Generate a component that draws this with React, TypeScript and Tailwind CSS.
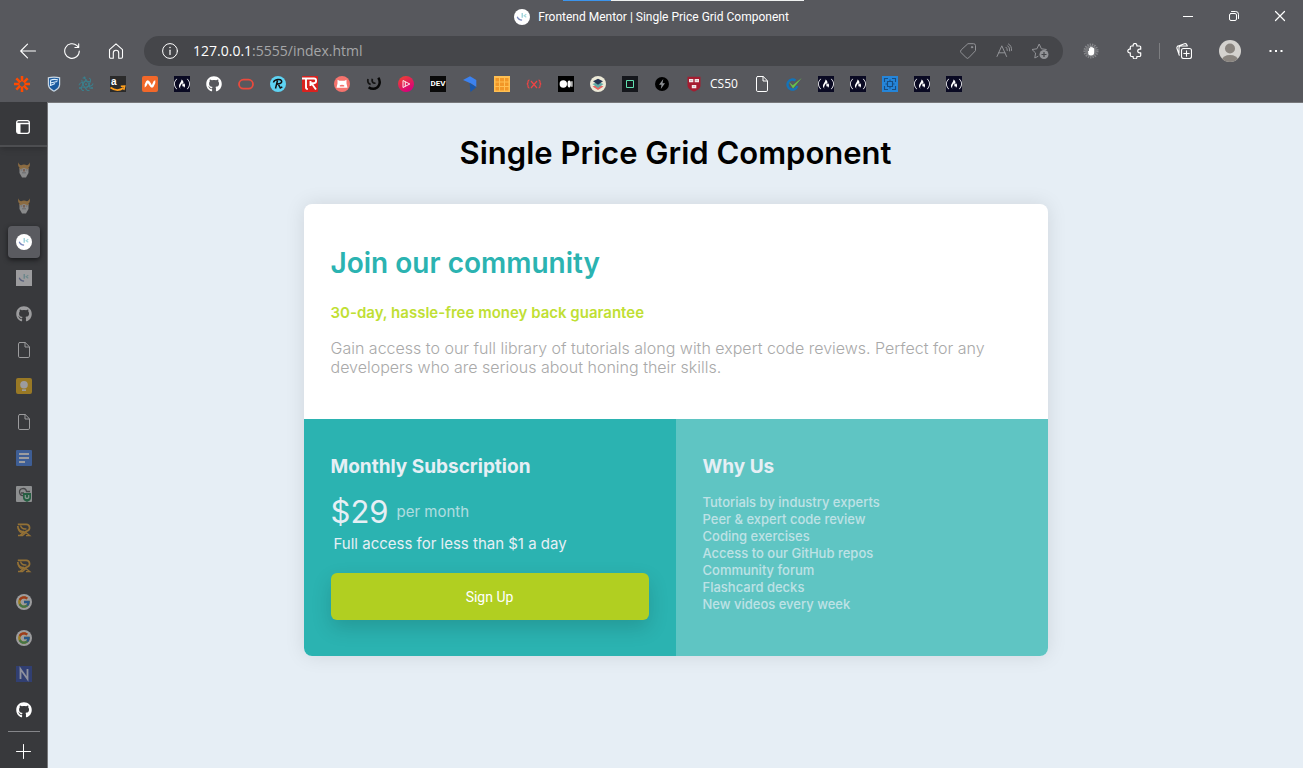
import type { ReactNode } from 'react';
import { FaFreeCodeCamp, FaGithub } from 'react-icons/fa';
import { FcGoogle } from 'react-icons/fc';

function Art({ children }: { children: ReactNode }) {
  return (
    <svg viewBox="0 0 16 16" className="size-4 shrink-0" fill="none" aria-hidden="true">
      {children}
    </svg>
  );
}

function LineArt({ children }: { children: ReactNode }) {
  return (
    <svg
      viewBox="0 0 16 16"
      className="size-4 shrink-0"
      fill="none"
      stroke="currentColor"
      strokeLinecap="round"
      strokeLinejoin="round"
      aria-hidden="true"
    >
      {children}
    </svg>
  );
}

const MentorMark = ({ round = true }: { round?: boolean }) => (
  <Art>
    {round ? <circle cx="8" cy="8" r="8" fill="#fff" /> : <rect width="16" height="16" fill="#fff" />}
    <path d="M3.3 7.8c.6 2.1 2.2 3.2 4.8 3.4" stroke="#7888bd" strokeWidth="1.3" />
    <path d="M8.2 4v4.8" stroke="#8fcbd4" strokeWidth="1.2" />
    <path d="M12.3 5.3 10.1 6.8l2.2 1.5" stroke="#a2d8dd" strokeWidth="1.1" />
  </Art>
);

const FreeCodeCamp = () => (
  <span className="flex size-4 items-center justify-center bg-[#0a0a23] text-white">
    <FaFreeCodeCamp className="size-4" />
  </span>
);

const PageIcon = () => (
  <LineArt>
    <path d="M3.8.5h5.400l4.300 4.300v9.400a1.300 1.300 0 0 1-1.300 1.300H3.800a1.300 1.300 0 0 1-1.300-1.300V1.800A1.300 1.300 0 0 1 3.800.5z" />
    <path d="M9 .700V5h4.300" />
  </LineArt>
);

const Viking = () => (
  <Art>
    <path d="M3.500 6h9v5L10 15.500H6L3.500 11z" fill="#d9dad9" />
    <path d="M2.300.300C1.800 3 2.300 5 3.500 5.500V7.500L8 6l4.500 1.500v-2c1.200-.5 1.700-2.500 1.200-5.200C13.300 2 12.300 3 10.800 3.300Q8 1.800 5.200 3.300C3.700 3 2.700 2 2.300.300z" fill="#e0a048" />
    <path d="M7 7h2v2.500H7z" fill="#b98c70" />
    <path d="M4.700 8h1.500M9.800 8h1.500M6 10.800h4" stroke="#8d8e90" strokeWidth=".8" />
  </Art>
);

const Feather = () => (
  <Art>
    <path d="M1.800 2.300h8.500a3.400 3.400 0 0 1 1 6.600C8 10 6.500 10.800 4.300 13.500M1.800 4c0 4 2.500 6.200 6 5.300" stroke="#f0aa30" strokeWidth="1.700" />
    <path d="M4.500 3.500c1 3 2.800 4 6 3.300M2.500 6.500c.5 3.500 2 4.500 4.500 4.500M2 13.500h4.500l3.500-3 3.800 3.200H10" stroke="#f0aa30" strokeWidth="1.300" />
  </Art>
);

const Google = () => (
  <span className="flex size-4 items-center justify-center rounded-full bg-white">
    <FcGoogle className="size-[14px]" />
  </span>
);

type Item = { name: string; icon: ReactNode; label?: string };

const bookmarks: Item[] = [
  {
    name: 'Zapier',
    icon: (
      <Art>
        <path d="M8 0v5.600M8 10.400V16M0 8h5.600M10.400 8H16M2.300 2.300l4 4M9.700 9.700l4 4M13.700 2.300l-4 4M6.300 9.700l-4 4" stroke="#ff4a00" strokeWidth="2.500" />
      </Art>
    ),
  },
  {
    name: 'Standard Bank',
    icon: (
      <Art>
        <path d="M1.800 1.300Q8-.3 14.200 1.300v7.200c0 3.500-3.200 5.900-6.200 7.300-3-1.400-6.200-3.800-6.200-7.300z" fill="#c9d6e2" />
        <path d="M3 2.300Q8 1.200 13 2.300v6c0 3-2.500 4.800-5 6.200-2.500-1.400-5-3.200-5-6.200z" fill="#1a5a9e" />
        <path d="M4 4.500q4-2 8-.5M4.300 7l7-1.500M4.500 9.500l4.500-2M4.500 5v5" stroke="#d9ecfb" strokeWidth="1.200" />
      </Art>
    ),
  },
  {
    name: 'Electron',
    icon: (
      <Art>
        <g stroke="#3b7f8c" strokeWidth="1">
          <ellipse cx="8" cy="8.300" rx="7" ry="2.700" transform="rotate(-8 8 8.300)" strokeDasharray="13 3" />
          <ellipse cx="8" cy="8.300" rx="7" ry="2.700" transform="rotate(60 8 8.300)" strokeDasharray="14 2" />
          <ellipse cx="8" cy="8.300" rx="7" ry="2.700" transform="rotate(122 8 8.300)" strokeDasharray="12 3" />
        </g>
        <circle cx="8" cy="8.300" r="1" fill="#3b7f8c" />
        <circle cx="2" cy="12" r="1.100" fill="#3b7f8c" />
        <circle cx="14" cy="12" r="1.100" fill="#3b7f8c" />
        <circle cx="6.500" cy="1.500" r="1.100" fill="#3b7f8c" />
      </Art>
    ),
  },
  {
    name: 'Amazon',
    icon: (
      <Art>
        <rect width="16" height="16" fill="#2b2b2b" />
        <text x="1" y="9.300" fill="#fff" fontFamily="Liberation Sans" fontWeight="700" fontSize="10">a</text>
        <path d="M.5 11.500q6.800 5 13.200.2" stroke="#ff9f1c" strokeWidth="1.700" />
        <path d="m10.800 10.300 4-.3-1 4" stroke="#ff9f1c" strokeWidth="1.400" />
      </Art>
    ),
  },
  {
    name: 'Namecheap',
    icon: (
      <Art>
        <rect width="16" height="16" rx="2" fill="#f2682a" />
        <path d="M2.700 10.200c1.500 0 1.700-4.700 3-4.700 1.500 0 2.700 5 4.300 5 1.400 0 1.700-5 3.300-5" stroke="#fff" strokeWidth="2.400" />
      </Art>
    ),
  },
  { name: 'freeCodeCamp', icon: <FreeCodeCamp /> },
  { name: 'GitHub', icon: <FaGithub className="size-4 text-white" /> },
  {
    name: 'Oracle',
    icon: (
      <Art>
        <rect x="1" y="3.700" width="14" height="9" rx="4.500" stroke="#ea4a3d" strokeWidth="1.800" />
      </Art>
    ),
  },
  {
    name: 'Replay',
    icon: (
      <Art>
        <circle cx="8" cy="8" r="8" fill="#5ed3f3" />
        <path d="M3.500 6.500C4 3.500 11.500 2 11.700 5.300c.1 2-2.700 2.700-4.700 2.900M7.500 4.500l-2 8M8.300 8.200l2 3.800 2-1.200" stroke="#111" strokeWidth="1.500" />
      </Art>
    ),
  },
  {
    name: 'TechRepublic',
    icon: (
      <Art>
        <rect width="16" height="16" rx="1" fill="#d9221f" />
        <path d="M0 2.500h12c2.800 0 2.800 4.700 0 4.700H9.500l4.500 6.300M4 3v8.500q0 1.500 1.800 1.500M8.500 5v5" stroke="#fff" strokeWidth="1.900" />
      </Art>
    ),
  },
  {
    name: 'Bear',
    icon: (
      <Art>
        <circle cx="8" cy="8" r="8" fill="#f5736d" />
        <path d="M3.500 3.800 5.500 4.800h5l2-1v3.700l1 4.300H2.500l1-4.300z" fill="#fff" />
        <path d="M5.800 10.500V9.300q2.200-1.300 4.400 0v1.200z" fill="#f5736d" />
      </Art>
    ),
  },
  {
    name: 'Udacity',
    icon: (
      <Art>
        <path d="M2 3c-.7 3 .3 5 2.700 5.300M6.300 2.700c-.7 3 .7 5 3.200 4.300" stroke="#151515" strokeWidth="1.800" />
        <path d="M12.300 1.800c3.200 4.700.5 11-5 11-1.800 0-3.300-.5-4.600-1.600" stroke="#080808" strokeWidth="2.500" />
      </Art>
    ),
  },
  {
    name: 'Pluralsight',
    icon: (
      <Art>
        <defs>
          <linearGradient id="plural" x1="0" y1="0" x2="0.600" y2="1">
            <stop stopColor="#f0472b" />
            <stop offset="1" stopColor="#d8007c" />
          </linearGradient>
        </defs>
        <circle cx="8" cy="8" r="8" fill="url(#plural)" />
        <path d="m5 4.500 6.800 3.500L5 11.500zM7.300 5.700v4.600" stroke="#fff" strokeWidth=".9" />
      </Art>
    ),
  },
  {
    name: 'Dev',
    icon: (
      <span className="flex size-4 items-center justify-center bg-[#0a0a0a] font-['Roboto',sans-serif] text-[8px] leading-4 font-bold text-white">
        DEV
      </span>
    ),
  },
  {
    name: 'Blue flag',
    icon: (
      <Art>
        <path d="M1 4 8 .300 14.300 4v7L9 7.500z" fill="#3c82f0" />
        <path d="m7.500 7 6.800 4.300L8.500 16z" fill="#1757ad" />
      </Art>
    ),
  },
  {
    name: 'Grid',
    icon: (
      <Art>
        <rect width="16" height="16" fill="#ffbf52" />
        <path d="M1.500 2H5v3.500H1.500zM6 2h4v3.500H6zM11 2h3.500v3.500H11zM1.500 6.500H5V10H1.500zM6 6.500h4V10H6zM11 6.500h3.500V10H11zM1.500 11H5v3.500H1.500zM6 11h4v3.500H6zM11 11h3.500v3.500H11z" fill="#f29727" />
      </Art>
    ),
  },
  {
    name: 'Variable',
    icon: (
      <Art>
        <path d="M3.500 4Q2 4 2 5.500v1Q2 7.800.8 8q1.200.2 1.200 1.500v1Q2 12 3.500 12M12.500 4Q14 4 14 5.500v1q0 1.300 1.200 1.500-1.200.2-1.200 1.500v1q0 1.500-1.500 1.500M5 5l6 7M11 5l-6 7" stroke="#f04444" strokeWidth="1.200" />
      </Art>
    ),
  },
  {
    name: 'Medium',
    icon: (
      <Art>
        <rect width="16" height="16" fill="#000" />
        <circle cx="5.300" cy="8" r="3.700" fill="#fff" />
        <ellipse cx="11.200" cy="8" rx="1.700" ry="3.400" fill="#fff" />
        <path d="M13.900 5.300v5.400" stroke="#fff" strokeWidth="1.200" />
      </Art>
    ),
  },
  {
    name: 'Layers',
    icon: (
      <Art>
        <circle cx="8" cy="8" r="8" fill="#ece9d7" />
        <path d="m2.500 10.500 5.500-2 5.500 2L8 14z" fill="#e86561" />
        <path d="m2.500 8 5.500-2 5.500 2L8 12z" fill="#5faaa7" />
        <path d="m3 5.300 5-2.500 5 2.500-5 3.500z" fill="#263552" />
      </Art>
    ),
  },
  {
    name: 'Square',
    icon: (
      <Art>
        <rect width="16" height="16" fill="#15171c" />
        <path d="M4.500 4.500h7v7h-7z" stroke="#61e1b0" />
      </Art>
    ),
  },
  {
    name: 'Bolt',
    icon: (
      <Art>
        <circle cx="8" cy="8" r="7" fill="#000" />
        <path d="M9.300 3 5 8.700h2.500L6.800 13 11 7.300H8.500z" fill="#8d9094" />
      </Art>
    ),
  },
  {
    name: 'CS50',
    label: 'CS50',
    icon: (
      <Art>
        <path d="M1.500.700h13v8.500c0 3.400-3.500 5.300-6.500 6.300-3-1-6.500-2.900-6.500-6.300z" fill="#a51c30" />
        <path d="M3 3h4.300v3.300H3zM8.700 3H13v3.300H8.700zM5.800 9h4.500v3.200H5.800z" fill="#f3e7e8" />
        <path d="M4 4.500h2.300M9.700 4.500H12M7 10.500h2" stroke="#b5a9ab" strokeWidth=".6" />
      </Art>
    ),
  },
  { name: 'Saved page', icon: <PageIcon /> },
  {
    name: 'Check',
    icon: (
      <Art>
        <path d="M9.500 4.500A5 5 0 1 0 11.300 10" stroke="#1473b8" strokeWidth="2.400" />
        <path d="m2.800 6 3.900 3.300L15.700 2 7 12.500z" fill="#67c34a" />
      </Art>
    ),
  },
  { name: 'Lessons', icon: <FreeCodeCamp /> },
  { name: 'Projects', icon: <FreeCodeCamp /> },
  {
    name: 'Frame',
    icon: (
      <Art>
        <rect width="16" height="16" fill="#2585d9" />
        <path d="M2.500 6v-3.500H6M10 2.500h3.500V6M13.500 10v3.500H10M6 13.500H2.500V10M5.500 5.500h5v5h-5zM8 3.500v2M8 10.500v2M3.500 8h2M10.500 8h2" stroke="#174d82" strokeWidth="1.100" />
      </Art>
    ),
  },
  { name: 'Forum', icon: <FreeCodeCamp /> },
  { name: 'Certificates', icon: <FreeCodeCamp /> },
];

const tabs: (Item & { active?: boolean; bright?: boolean })[] = [
  { name: 'Viking', icon: <Viking /> },
  { name: 'Viking settings', icon: <Viking /> },
  { name: 'Frontend Mentor', icon: <MentorMark />, active: true },
  { name: 'Challenges', icon: <MentorMark round={false} /> },
  { name: 'GitHub', icon: <FaGithub className="size-4 text-white" /> },
  { name: 'Document', icon: <PageIcon /> },
  {
    name: 'Notes',
    icon: (
      <Art>
        <rect width="16" height="16" rx="2" fill="#f9b90f" />
        <circle cx="8" cy="6.800" r="3.800" fill="#fff" />
        <path d="M6 11.300h4V13H6z" fill="#fff" />
      </Art>
    ),
  },
  { name: 'File', icon: <PageIcon /> },
  {
    name: 'Docs',
    icon: (
      <Art>
        <rect width="16" height="16" rx="1" fill="#4483ee" />
        <path d="M3 4h10M3 8h10M3 12h6" stroke="#fff" strokeWidth="1.800" />
      </Art>
    ),
  },
  {
    name: 'Shield',
    icon: (
      <Art>
        <rect width="16" height="16" rx="1" fill="#e2e4e4" />
        <path d="M7.500 9.500a3.500 3.500 0 1 1 3-4H14M5 7h3" stroke="#555" strokeWidth="1.300" />
        <path d="M7 7h8v5c0 2-2 3-4 4-2-1-4-2-4-4z" fill="#168548" />
        <path d="M9.300 9v2.500q1.700 2 3.400 0V9" stroke="#d8f3e4" strokeWidth="1.200" />
      </Art>
    ),
  },
  { name: 'Feather', icon: <Feather /> },
  { name: 'Feather library', icon: <Feather /> },
  { name: 'Google', icon: <Google /> },
  { name: 'Google results', icon: <Google /> },
  {
    name: 'Notion',
    icon: (
      <Art>
        <rect width="16" height="16" fill="#2c46a8" />
        <path d="M4.500 13V3l7 10V3" stroke="#e4e8ff" strokeWidth="1.800" />
      </Art>
    ),
  },
  { name: 'Repository', icon: <FaGithub className="size-4 text-white" />, bright: true },
];

const benefits = [
  'Tutorials by industry experts',
  'Peer & expert code review',
  'Coding exercises',
  'Access to our GitHub repos',
  'Community forum',
  'Flashcard decks',
  'New videos every week',
];

function IconButton({ name, className, children }: { name: string; className: string; children: ReactNode }) {
  return (
    <button type="button" aria-label={name} className={`flex shrink-0 items-center justify-center ${className}`}>
      {children}
    </button>
  );
}

function TitleBar() {
  return (
    <div className="relative grid h-9 grid-cols-[1fr_auto_1fr] items-center">
      <div className="absolute top-0 left-[563px] flex h-px w-[241px]">
        <span className="w-12 bg-[#3b94ec]" />
        <span className="flex-1 bg-[#eef0f0]" />
      </div>
      <span />
      <div className="flex items-center gap-2 pb-[3px] font-['Roboto',sans-serif] text-xs">
        <MentorMark />
        <span>Frontend Mentor | Single Price Grid Component</span>
      </div>
      <div className="flex justify-end pb-1">
        <IconButton name="Minimize" className="h-8 w-[46px]">
          <LineArt><path d="M3 8.500h10" strokeLinecap="butt" /></LineArt>
        </IconButton>
        <IconButton name="Restore" className="h-8 w-[46px]">
          <LineArt>
            <rect x="3.500" y="5.500" width="7" height="7" rx="1.500" />
            <path d="M5.500 3.500h4.200a2.800 2.800 0 0 1 2.800 2.800v4.200" />
          </LineArt>
        </IconButton>
        <IconButton name="Close" className="h-8 w-[46px]">
          <LineArt><path d="m3.500 3.500 9 9m0-9-9 9" strokeWidth="1.200" /></LineArt>
        </IconButton>
      </div>
    </div>
  );
}

function Toolbar() {
  return (
    <div className="flex h-[30px] items-center pr-[5px] pl-[6px]">
      <IconButton name="Back" className="h-[30px] w-11">
        <LineArt><path d="M15.500 8H.700M7.500 1.200.700 8l6.800 6.800" strokeWidth="1.100" /></LineArt>
      </IconButton>
      <IconButton name="Refresh" className="h-[30px] w-11">
        <LineArt><path d="M15.300 8A7.300 7.300 0 1 1 13 2.700l1.500 1.600M14.700.700v3.800h-3.800" strokeWidth="1.100" /></LineArt>
      </IconButton>
      <IconButton name="Home" className="h-[30px] w-11">
        <LineArt>
          <path d="M1.500 6.700 8 .900l6.500 5.800V14a1.200 1.200 0 0 1-1.200 1.200h-2.600V10a2.700 2.700 0 0 0-5.400 0v5.200H2.700A1.200 1.200 0 0 1 1.500 14z" strokeWidth="1.100" />
        </LineArt>
      </IconButton>
      <div className="ml-[6px] flex h-[30px] min-w-0 flex-1 items-center rounded-full bg-[#45464a] pr-[5px] pl-[18px]">
        <LineArt>
          <circle cx="8" cy="8" r="7.400" />
          <path d="M8 7.200v4.300" strokeWidth="1.200" />
          <path d="M8 4.500v.1" strokeWidth="1.500" />
        </LineArt>
        <a href="#page" className="ml-[15px] flex-1 truncate text-sm text-[#a5a6a8]">
          <span className="text-white">127.0.0.1</span>:5555/index.html
        </a>
        <div className="flex text-[#929397]">
          <IconButton name="Shopping" className="h-[30px] w-9">
            <LineArt>
              <path d="M8.300.700h5.200a2 2 0 0 1 2 2v5L8.700 14.800a1.700 1.700 0 0 1-2.400 0L1 9.500a1.700 1.700 0 0 1 0-2.400z" />
              <circle cx="12" cy="4.200" r=".7" fill="currentColor" />
            </LineArt>
          </IconButton>
          <IconButton name="Read aloud" className="h-[30px] w-9">
            <LineArt><path d="M1 13.500 5.800 2.800l4.800 10.700M2.700 9.800h6.200M10 4.200q1.400 1 1.300 3.300M11.800 2.800Q14 4.200 13.700 8M12.500 1q3.500 1.800 3 6.500" /></LineArt>
          </IconButton>
          <IconButton name="Add to favorites" className="h-[30px] w-9">
            <svg viewBox="0 0 18 18" className="size-[18px]" fill="none" aria-hidden="true">
              <path d="M7.300 14.200 3.800 16l.8-5L1 7.500l4.900-.7L8.200 2l2.200 4.800 5.200.7" stroke="currentColor" strokeLinejoin="round" />
              <circle cx="13" cy="12.500" r="4.500" fill="currentColor" />
              <path d="M13 10v5M10.500 12.500h5" stroke="#45464a" strokeWidth="1.200" />
            </svg>
          </IconButton>
        </div>
      </div>
      <div className="ml-[6px] flex items-center">
        <IconButton name="Ad blocker" className="h-[30px] w-11">
          <Art>
            <circle cx="8" cy="8" r="6.300" stroke="#85868a" strokeWidth="2.500" strokeDasharray="1.300 1" />
            <circle cx="8" cy="8" r="5.800" fill="#77787c" />
            <path d="M4.800 8.200 6 8V5.500q.5-1 1.200 0V4q.8-1 1.500 0v.5q1.200-.6 1.400.6.900-.3 1.100.6v3.500q0 3.300-3.200 3.300T5.200 9z" fill="#fff" />
          </Art>
        </IconButton>
        <IconButton name="Extensions" className="h-[30px] w-11">
          <LineArt>
            <path d="M4.500 3h1.700a1.900 1.900 0 1 1 3.600 0h2.700a1.200 1.200 0 0 1 1.200 1.200v2h-1.200a1.800 1.800 0 1 0 0 3.600h1.200v2.500a1.200 1.200 0 0 1-1.200 1.200H9.800a1.900 1.900 0 1 1-3.600 0H4.500a1.200 1.200 0 0 1-1.200-1.200V9.800a1.900 1.900 0 1 1 0-3.600v-2A1.200 1.200 0 0 1 4.500 3z" strokeWidth="1.200" />
          </LineArt>
        </IconButton>
        <span className="mx-[2px] h-4 w-px bg-[#7d7e81]" />
        <IconButton name="Collections" className="h-[30px] w-11">
          <LineArt>
            <rect x="5.500" y="5.500" width="10" height="10" rx="2" strokeWidth="1.100" />
            <path d="M10.500 7.800v5.400M7.800 10.500h5.400M3.300 12.200 1 5.500a2 2 0 0 1 1.300-2.600L8.500.800A2 2 0 0 1 11 2.100l.3.900M3 10V5a2 2 0 0 1 2-2h6" strokeWidth="1.100" />
          </LineArt>
        </IconButton>
        <IconButton name="Profile" className="h-[30px] w-12">
          <svg viewBox="0 0 22 22" className="size-[22px]" aria-hidden="true">
            <defs><clipPath id="face"><circle cx="11" cy="11" r="11" /></clipPath></defs>
            <g clipPath="url(#face)">
              <path d="M0 0h22v22H0z" fill="#d4d2cf" />
              <circle cx="11" cy="8.500" r="5" fill="#89847f" />
              <ellipse cx="11" cy="20" rx="8" ry="5" fill="#89847f" />
            </g>
          </svg>
        </IconButton>
        <IconButton name="More" className="h-[30px] w-11">
          <Art><path d="M1.500 7h2v2h-2zM7 7h2v2H7zM12.500 7h2v2h-2z" fill="#fff" /></Art>
        </IconButton>
      </div>
    </div>
  );
}

function SideTabs() {
  return (
    <aside className="flex w-12 shrink-0 flex-col items-center border-r border-[#77787b] bg-[#38393c] text-white">
      <div className="flex w-full justify-center border-b-2 border-[#4d4e51] pt-[7px] shadow-md">
        <IconButton name="Toggle vertical tabs" className="h-9 w-8">
          <LineArt>
            <rect x=".7" y="1.700" width="12.600" height="12.600" rx="2" strokeWidth="1.300" />
            <path d="M1 4.500h12" strokeWidth="1.300" />
            <path d="M1 4.500h3.500v9.500H2l-1-1z" fill="currentColor" stroke="none" />
          </LineArt>
        </IconButton>
      </div>
      <nav aria-label="Tabs" className="mt-[7px] flex flex-col gap-1">
        {tabs.map((tab) => (
          <IconButton
            key={tab.name}
            name={tab.name}
            className={tab.active ? 'h-8 w-8 rounded bg-[#5a5b60] shadow-[0_2px_5px_#18191b]' : 'h-8 w-8'}
          >
            <span className={tab.active || tab.bright ? '' : 'opacity-50'}>{tab.icon}</span>
          </IconButton>
        ))}
      </nav>
      <hr className="mt-[5px] w-8 border-[#85868a]" />
      <IconButton name="New tab" className="mt-1 h-8 w-8">
        <LineArt><path d="M7.500.500v14M.500 7.500h14" /></LineArt>
      </IconButton>
    </aside>
  );
}

function PriceGrid() {
  return (
    <main
      id="page"
      className="flex flex-1 flex-col items-center border-t border-[#77787b] bg-[#e6eef5] px-6 pt-[30px] pb-8 font-['Inter',sans-serif]"
    >
      <h1 className="text-center text-[31px] leading-10 font-semibold text-black">Single Price Grid Component</h1>
      <article className="mt-[31px] w-full max-w-[744px] overflow-hidden rounded-lg bg-white shadow-[0_0_20px_rgba(0,0,0,0.1)]">
        <section className="px-[27px] pt-[41px] pb-[42px]">
          <h2 className="text-[28px] leading-9 font-semibold text-[#2bb3b1]">Join our community</h2>
          <h3 className="mt-[22px] text-[15px] leading-5 font-semibold text-[#c0df34]">30-day, hassle-free money back guarantee</h3>
          <p className="mt-4 text-base leading-[19px] font-light text-[#a9a9a9]">
            Gain access to our full library of tutorials along with expert code reviews. Perfect for any developers who are serious about honing their skills.
          </p>
        </section>
        <div className="grid sm:grid-cols-2">
          <section className="bg-[#2bb3b1] px-[27px] py-9 text-[#e6eff5]">
            <h3 className="text-[19px] leading-6 font-bold">Monthly Subscription</h3>
            <p className="mt-[15px] flex items-center gap-2">
              <span className="text-[31px] leading-9">$29</span>
              <span className="text-[15px] leading-9 opacity-70">per month</span>
            </p>
            <p className="pl-[3px] text-[15px] leading-7">Full access for less than $1 a day</p>
            <button
              type="button"
              className="mt-[15px] h-[47px] w-full rounded-md bg-[#b1cf21] font-['Roboto',sans-serif] text-sm text-white shadow-[0_8px_20px_rgba(0,0,0,0.15)]"
            >
              Sign Up
            </button>
          </section>
          <section className="bg-[#5fc5c3] px-[27px] py-9 text-[#e6eff5]">
            <h3 className="text-[19px] leading-6 font-bold">Why Us</h3>
            <ul className="mt-[15px] text-[13px] leading-[17px] font-medium opacity-70">
              {benefits.map((benefit) => (
                <li key={benefit}>{benefit}</li>
              ))}
            </ul>
          </section>
        </div>
      </article>
    </main>
  );
}

export default function App() {
  return (
    <div className="flex min-h-screen flex-col bg-[#e6eef5]">
      <header className="bg-[#57585d] font-['Open_Sans','Noto_Sans',sans-serif] text-white">
        <TitleBar />
        <Toolbar />
        <nav aria-label="Bookmarks" className="flex h-9 items-center gap-4 pl-[14px]">
          {bookmarks.map((bookmark) => (
            <a key={bookmark.name} href="#page" aria-label={bookmark.name} className="flex items-center gap-2 text-xs">
              {bookmark.icon}
              {bookmark.label && <span>{bookmark.label}</span>}
            </a>
          ))}
        </nav>
      </header>
      <div className="flex flex-1">
        <SideTabs />
        <PriceGrid />
      </div>
    </div>
  );
}
